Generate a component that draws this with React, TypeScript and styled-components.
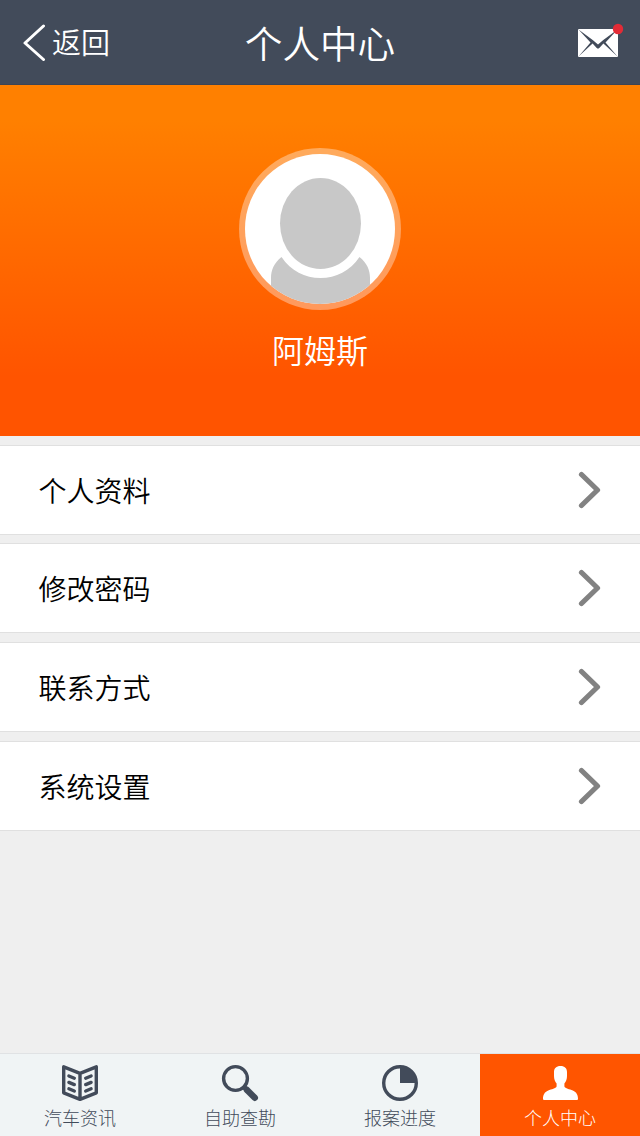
import React from 'react';
import styled, { createGlobalStyle } from 'styled-components';

const GlobalStyle = createGlobalStyle`
  *, *::before, *::after { box-sizing: border-box; }
  body {
    margin: 0;
    background: #efefef;
    font-family: "Noto Sans CJK SC", "Liberation Sans", sans-serif;
    font-weight: 350;
  }
`;

const Screen = styled.div`
  display: flex;
  flex-direction: column;
  width: 640px;
  height: 1136px;
  background: #efefef;
  overflow: hidden;
`;

const Header = styled.header`
  display: grid;
  grid-template-columns: 200px 1fr 200px;
  align-items: center;
  flex: none;
  height: 85px;
  background: #424b5a;
  border-bottom: 1px solid #3d4453;
  color: #fff;
`;

const BackButton = styled.a`
  display: flex;
  align-items: center;
  gap: 6px;
  padding-left: 22px;
  font-size: 29px;
  line-height: 40px;
`;

const BackLabel = styled.span`
  padding-bottom: 2px;
`;

const Title = styled.h1`
  margin: 0;
  padding-bottom: 1px;
  font-size: 37.6px;
  font-weight: inherit;
  line-height: 50px;
  text-align: center;
  white-space: nowrap;
`;

const MailButton = styled.a`
  display: flex;
  justify-content: flex-end;
  padding: 0 16px 4px 0;
`;

const Hero = styled.section`
  display: flex;
  flex-direction: column;
  align-items: center;
  flex: none;
  height: 351px;
  padding-top: 63px;
  background: linear-gradient(#ff8000 0%, #ff8000 10%, #ff5400 83%, #ff5400 100%);
  color: #fff;
`;

const Name = styled.div`
  margin-top: 15px;
  font-size: 32px;
  line-height: 48px;
`;

const Menu = styled.nav`
  flex: none;
  margin-top: 9px;
`;

const MenuItem = styled.a<{ $gap: number }>`
  display: flex;
  align-items: center;
  justify-content: space-between;
  height: 90px;
  margin-bottom: ${(p) => p.$gap}px;
  padding: 0 38px 0 38.5px;
  background: #fff;
  border: solid #e0e0e0;
  border-width: 1px 0;
  color: #000;
  font-size: 28px;
  line-height: 40px;
`;

const TabBar = styled.footer`
  display: flex;
  flex: none;
  height: 83px;
  margin-top: auto;
  border-top: 1px solid #e0e2e4;
`;

const Tab = styled.a<{ $active?: boolean }>`
  display: flex;
  flex-direction: column;
  align-items: center;
  flex: 1;
  padding-top: 10px;
  background: ${(p) => (p.$active ? '#ff5500' : '#f0f4f5')};
  color: ${(p) => (p.$active ? '#fff' : '#424b5a')};
  font-size: 18px;
  font-weight: 300;
  line-height: 26px;

  svg { margin-bottom: 2px; }
`;

const BackIcon = () => (
  <svg width="24" height="38" viewBox="0 0 24 38" fill="none" stroke="#fff" strokeWidth="3" strokeLinecap="round" strokeLinejoin="round">
    <path d="M21.5 3 3 20l18.5 16.5" />
  </svg>
);

const MailIcon = () => (
  <svg width="46" height="36" viewBox="0 0 46 36">
    <rect y="7" width="40" height="28" rx="1" fill="#fff" />
    <path d="M.5 7.5 14.7 18 20 22.6 25.3 18 39.5 7.5 27.5 20.4 39.5 34.5 25.4 21.6 21.3 26Q20 27.2 18.7 26L14.6 21.6 .5 34.5 12.5 20.4Z" fill="#424b5a" />
    <circle cx="40" cy="7" r="5.2" fill="#e32b36" />
  </svg>
);

const Avatar = () => (
  <svg width="162" height="162" viewBox="0 0 162 162">
    <defs>
      <clipPath id="avatarClip"><circle cx="81" cy="81" r="75" /></clipPath>
    </defs>
    <circle cx="81" cy="81" r="81" fill="#fff" fillOpacity=".36" />
    <circle cx="81" cy="81" r="75" fill="#fff" />
    <g clipPath="url(#avatarClip)" fill="#c8c8c8">
      <ellipse cx="81.5" cy="75.5" rx="40.5" ry="45.5" />
      <path d="M42.5 109C35 115 32 122 32 130V162H131V130C131 122 128 115 120.5 109C111 123 97 130 81.5 130S52 123 42.5 109Z" />
    </g>
  </svg>
);

const Chevron = () => (
  <svg width="24" height="38" viewBox="0 0 24 38" fill="none" stroke="#828282" strokeWidth="5.2" strokeLinecap="round" strokeLinejoin="round">
    <path d="M3.5 3.5 19.5 19 3.5 34.5" />
  </svg>
);

const BookIcon = () => (
  <svg width="38" height="38" viewBox="0 0 38 38" fill="none" stroke="currentColor" strokeWidth="3.4" strokeLinejoin="round">
    <path d="M2.7 2.8 19 9.3 35.3 2.8V28.8L19 35.3 2.7 28.8ZM19 9.3V35.3" />
    <path d="m7.9 12 5.4 2.2m-5.4 4.2 5.4 2.2m-5.4 4.2 5.4 2.2M30.1 12l-5.4 2.2m5.4 4.2-5.4 2.2m5.4 4.2-5.4 2.2" strokeLinecap="round" />
  </svg>
);

const SearchIcon = () => (
  <svg width="38" height="38" viewBox="0 0 38 38" fill="none" stroke="currentColor" strokeLinecap="round">
    <circle cx="14.5" cy="14.5" r="11.9" strokeWidth="3.4" />
    <path d="m23.5 23.5 3 3" strokeWidth="5" />
    <path d="m26 26 7.8 7.8" strokeWidth="6.4" />
  </svg>
);

const PieIcon = () => (
  <svg width="38" height="38" viewBox="0 0 38 38">
    <circle cx="19" cy="19" r="16.3" fill="none" stroke="currentColor" strokeWidth="3.4" />
    <path d="M19 2.5V19H35.5A16.5 16.5 0 0 0 19 2.5Z" fill="currentColor" />
  </svg>
);

const UserIcon = () => (
  <svg width="38" height="38" viewBox="0 0 38 38" fill="currentColor">
    <path d="M19.5 2C15.2 2 13 4.4 13 8V12C13 15 14 17.6 15.6 19.4V22.4C14.8 24.4 10.5 25 7.2 26.4C3.4 28 2 31 2 34.8Q2 36 3 36H36Q37 36 37 34.8C37 31 35.6 28 31.8 26.4C28.5 25 24.2 24.4 23.4 22.4V19.4C25 17.6 26 15 26 12V8C26 4.4 23.8 2 19.5 2Z" />
  </svg>
);

const menuItems = [
  { label: '个人资料', gap: 8 },
  { label: '修改密码', gap: 9 },
  { label: '联系方式', gap: 9 },
  { label: '系统设置', gap: 0 },
];

const tabs = [
  { label: '汽车资讯', Icon: BookIcon },
  { label: '自助查勘', Icon: SearchIcon },
  { label: '报案进度', Icon: PieIcon },
  { label: '个人中心', Icon: UserIcon, active: true },
];

export default function App() {
  return (
    <>
      <GlobalStyle />
      <Screen>
        <Header>
          <BackButton><BackIcon /><BackLabel>返回</BackLabel></BackButton>
          <Title>个人中心</Title>
          <MailButton><MailIcon /></MailButton>
        </Header>
        <Hero>
          <Avatar />
          <Name>阿姆斯</Name>
        </Hero>
        <Menu>
          {menuItems.map(({ label, gap }) => (
            <MenuItem key={label} $gap={gap}>{label}<Chevron /></MenuItem>
          ))}
        </Menu>
        <TabBar>
          {tabs.map(({ label, Icon, active }) => (
            <Tab key={label} $active={active}><Icon />{label}</Tab>
          ))}
        </TabBar>
      </Screen>
    </>
  );
}
